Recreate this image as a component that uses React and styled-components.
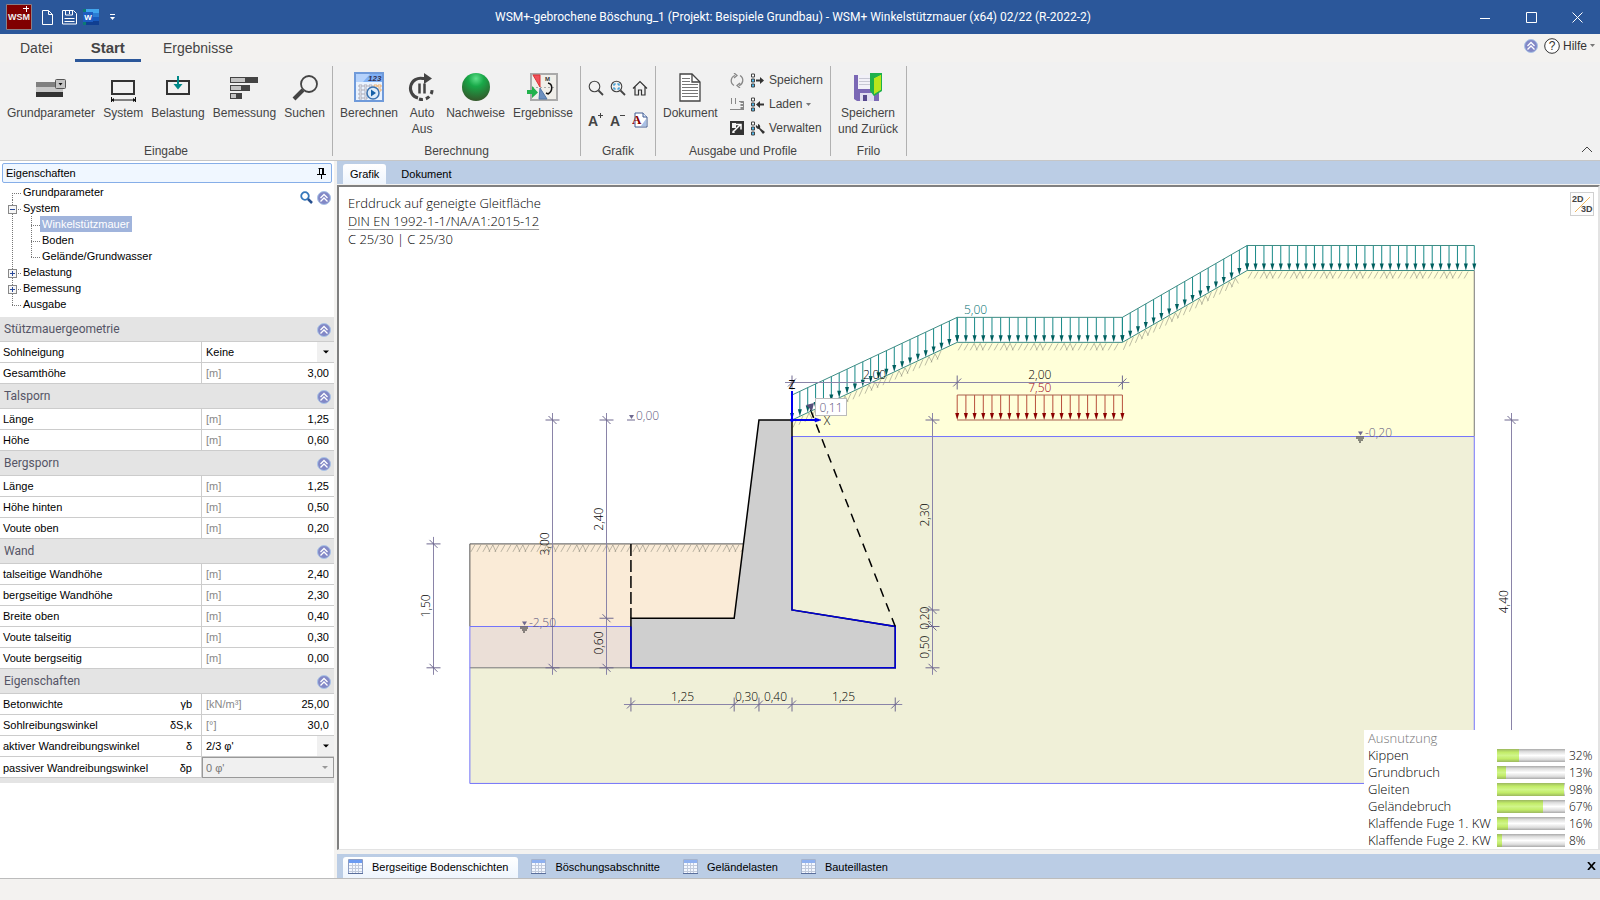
import { useState } from 'react'
import styled, { createGlobalStyle } from 'styled-components'

const UI = '"Liberation Sans", Arial, sans-serif'
const HEAD = 'Roboto, "Liberation Sans", sans-serif'
const DRAW = '"Open Sans", "Noto Sans", sans-serif'

const GlobalStyle = createGlobalStyle`
  * {
    box-sizing: border-box;
  }

  body {
    margin: 0;
    background: #f3f2f0;
    font-family: ${UI};
    font-size: 11px;
    color: #000;
  }

  button, input, select {
    font: inherit;
    color: inherit;
    border: 0;
    border-radius: 0;
    padding: 0;
    margin: 0;
    background: none;
  }
`

const Window = styled.div`
  display: flex;
  flex-direction: column;
  height: 100vh;
  overflow: hidden;
`

/* ---------- title bar ---------- */

const TitleBar = styled.header`
  display: flex;
  align-items: center;
  height: 34px;
  flex: none;
  background: #2b579a;
  color: #fff;
`

const QuickAccess = styled.div`
  display: flex;
  align-items: center;
  gap: 6px;
  padding-left: 6px;
  width: 124px;

  svg {
    display: block;
  }
`

const Title = styled.h1`
  flex: 1;
  margin: 0;
  text-align: center;
  font: 400 12px/32px ${HEAD};
`

const WindowButton = styled.button`
  display: grid;
  place-items: center;
  width: 46px;
  height: 34px;
`

/* ---------- ribbon ---------- */

const RibbonTabs = styled.nav`
  display: flex;
  gap: 6px;
  height: 28px;
  flex: none;
  padding-left: 4px;
  background: #f3f2f0;
`

const RibbonTab = styled.button`
  padding: 2px 16px 0;
  height: 28px;
  font-size: ${(props) => (props.$active ? 15 : 14)}px;
  font-weight: ${(props) => (props.$active ? 700 : 400)};
  color: #444;
  border-bottom: 3px solid ${(props) => (props.$active ? '#2b579a' : 'transparent')};
`

const HelpArea = styled.div`
  display: flex;
  align-items: center;
  gap: 6px;
  margin-left: auto;
  padding: 0 5px 5px 0;
  font-size: 12px;
  color: #333;
`

const HelpButton = styled.button`
  display: flex;
  align-items: center;
  gap: 3px;
`

const RibbonBar = styled.div`
  display: flex;
  height: 99px;
  flex: none;
  padding: 4px 7px 4px 0;
  background: #f1f1f1;
  border-bottom: 1px solid #c6c6c6;
  color: #444;
  font-size: 12px;
`

const Group = styled.section`
  display: flex;
  flex-direction: column;
  justify-content: space-between;
  min-width: ${(props) => props.$min}px;
  padding: 0 ${(props) => (props.$tight ? 4 : 7)}px;
  border-right: 1px solid #b1b1b1;
`

const GroupItems = styled.div`
  display: flex;
  justify-content: space-between;
`

const GroupName = styled.div`
  text-align: center;
  line-height: 10px;
`

const BigButton = styled.button`
  display: flex;
  flex-direction: column;
  align-items: center;
  padding-top: 6px;
  min-width: 32px;
  line-height: 16px;

  svg {
    display: block;
    margin-bottom: 3px;
  }
`

const IconGrid = styled.div`
  display: grid;
  grid-template-columns: repeat(3, 22px);
  grid-auto-rows: 32px;
  padding-top: 6px;
`

const IconButton = styled.button`
  display: grid;
  place-items: center;
`

const ProfileGrid = styled.div`
  display: grid;
  grid-template-columns: 16px auto;
  grid-auto-rows: 24px;
  column-gap: 5px;
  padding-top: 2px;
`

const ProfileButton = styled.button`
  display: flex;
  align-items: center;
  gap: 4px;
`

const Collapse = styled.button`
  margin-left: auto;
  align-self: flex-end;
`

/* ---------- body ---------- */

const Body = styled.div`
  display: flex;
  flex: 1;
  min-height: 0;
`

const Sidebar = styled.aside`
  flex: none;
  width: 334px;
  background: #fff;
  overflow: hidden;
`

const PanelHead = styled.div`
  display: flex;
  align-items: center;
  justify-content: space-between;
  height: 20px;
  margin: 2px 2px 1px;
  padding: 0 5px 0 3px;
  background: #f0f7ff;
  border: 1px solid #86aee8;
  border-radius: 2px;
`

const TreeArea = styled.div`
  display: flex;
  justify-content: space-between;
  height: 133px;
`

const TreeList = styled.ul`
  list-style: none;
  margin: 0;
  padding: 0 0 0 7px;
`

const TreeRow = styled.li`
  display: flex;
  align-items: center;
  height: 16px;

  svg {
    display: block;
  }
`

const TreeLabel = styled.button`
  height: 16px;
  padding: 0 3px 0 2px;
  line-height: 15px;
  background: ${(props) => (props.$active ? '#a0b4dc' : 'transparent')};
  color: ${(props) => (props.$active ? '#fff' : '#000')};
`

const TreeTools = styled.div`
  display: flex;
  align-items: flex-start;
  gap: 4px;
  padding: 7px 3px 0 0;
`

const SectionHead = styled.h2`
  display: flex;
  align-items: center;
  justify-content: space-between;
  height: 25px;
  margin: 0;
  padding: 1px 3px 0 4px;
  background: #e4e4e4;
  border-bottom: 1px solid #ccc;
  color: #556;
  font: 400 12px/23px ${HEAD};
`

const PropRow = styled.div`
  display: grid;
  grid-template-columns: 202px minmax(0, 1fr);
  height: 21px;
  border-bottom: 1px solid #ccc;
`

const PropLabel = styled.label`
  display: flex;
  align-items: center;
  justify-content: space-between;
  padding: 0 9px 0 3px;
  border-right: 1px solid #ccc;
`

const PropValue = styled.div`
  display: flex;
  align-items: center;
  padding: 0 5px 0 4px;
`

const Unit = styled.span`
  color: #888;
`

const PropInput = styled.input`
  flex: 1;
  min-width: 0;
  text-align: right;
`

const SelectBox = styled.div`
  display: grid;
  grid-template-columns: 1fr 17px;
  background: ${(props) => (props.$off ? '#f0f0f0' : '#fff')};
  border: ${(props) => (props.$off ? '1px solid #999' : '0')};

  svg {
    grid-area: 1 / 2;
    align-self: stretch;
    background: #f0f0f0;
    pointer-events: none;
  }
`

const PropSelect = styled.select`
  grid-area: 1 / 1 / 2 / 3;
  appearance: none;
  padding-left: ${(props) => (props.disabled ? 3 : 4)}px;
  color: ${(props) => (props.disabled ? '#777' : '#000')};
  opacity: 1;
`

const PanelEnd = styled.div`
  height: 5px;
  background: #e4e4e4;
`

const Main = styled.main`
  display: flex;
  flex-direction: column;
  flex: 1;
  min-width: 0;
  margin-left: 3px;
`

const TabBar = styled.div`
  display: flex;
  gap: 8px;
  height: ${(props) => (props.$low ? 24 : 23)}px;
  flex: none;
  padding: 3px 4px 0 6px;
  background: #bbcde5;
`

const Tab = styled.button`
  display: flex;
  align-items: center;
  gap: 9px;
  padding: ${(props) => (props.$icon ? '0 10px 2px 5px' : '0 7px')};
  border-radius: 3px 3px 0 0;
  background: ${(props) => (props.$active ? 'linear-gradient(#fff, #eef5fd)' : 'none')};
`

const CloseTab = styled.button`
  margin-left: auto;
  padding-bottom: 4px;
`

const Canvas = styled.div`
  position: relative;
  display: flex;
  flex: 1;
  min-height: 0;
  margin: 1px 0 4px;
  background: #fff;
  border: 2px solid;
  border-color: #808080 #e3e3e3 #e3e3e3 #808080;
  border-bottom-width: 1px;
`

const Drawing = styled.svg`
  display: block;
  flex: 1;
  min-width: 0;
  font-family: ${DRAW};
  font-weight: 300;
  font-size: 12px;
`

const CanvasHead = styled.div`
  position: absolute;
  top: 7px;
  left: 9px;
  font: 300 13px/18px ${DRAW};

  div:nth-child(2) {
    text-decoration: underline;
    text-decoration-color: #999;
    text-underline-offset: 3px;
  }
`

const ViewSwitch = styled.button`
  position: absolute;
  top: 5px;
  right: 4px;
  width: 24px;
  height: 24px;
  border: 1px solid #d0d0d0;
  background: #fdfdfd;

  svg {
    display: block;
  }
`

const Usage = styled.section`
  position: absolute;
  right: 0;
  bottom: 0;
  padding-left: 4px;
  background: #fff;
  font: 300 13px/17px ${DRAW};
`

const UsageTitle = styled.div`
  color: #777;
`

const UsageRow = styled.div`
  display: grid;
  grid-template-columns: 129px 68px 33px;
  align-items: center;
`

const Bar = styled.div`
  height: 13px;
  background: linear-gradient(#aaa, #ddd 20%, #fff 50%, #ddd 80%, #aaa);
`

const BarFill = styled.div`
  height: 13px;
  background: linear-gradient(#9cb860, #c2ec68 25%, #d0f58a 50%, #c2ec68 75%, #9cb860);
`

const Percent = styled.span`
  padding-left: 4px;
  font-size: 12px;
`

const StatusBar = styled.footer`
  height: 22px;
  flex: none;
  border-top: 1px solid #bcbcbc;
  background: #f3f2f0;
`

/* ---------- icons ---------- */

const Chevrons = ({ size = 14 }) => (
  <svg width={size} height={size} viewBox="0 0 14 14">
    <circle cx="7" cy="7" r="6.5" fill="#8288c6" stroke="#a9c3e6" />
    <path d="M3.5 7 7 3.5 10.5 7M3.5 10.5 7 7l3.5 3.5" fill="none" stroke="#fff" strokeWidth="1.3" />
  </svg>
)

const Triangle = ({ color = '#000', width = 17 }) => (
  <svg width={width} height="100%" viewBox="0 0 17 19">
    <path d="M6 8h6L9 11z" fill={color} />
  </svg>
)

const Lens = ({ zoom }) => (
  <svg width="16" height="16" viewBox="0 0 16 16" fill="none">
    <circle cx="6.5" cy="6.5" r="5.3" stroke="#444" strokeWidth="1.1" />
    <path d="M10.5 10.5 15 15" stroke="#444" strokeWidth="1.8" />
    {zoom && <path d="M4 5.8V4h1.800M7.200 4H9v1.800M9 7.200V9H7.200M5.800 9H4V7.200" stroke="#1e8fd0" strokeWidth="1.200" />}
  </svg>
)

const TableIcon = ({ active }) => (
  <svg width="15" height="15" viewBox="0 0 15 15">
    <path d="M.5.5h14v14H.5z" fill="#f4f8ff" stroke={active ? '#8a9cc4' : '#a4b3cd'} />
    <path d="M1 1h13v3H1z" fill={active ? '#6b9bf2' : '#8fb1f0'} />
    <path d="M1 6.5h13M1 9.5h13M1 12.5h13M4.5 4v10M7.5 4v10M10.5 4v10" stroke="#c2cbdc" />
    <path d="M0 14.500h15" stroke="#5a6f9c" />
  </svg>
)

const Squares = ({ children }) => (
  <svg width="15" height="15" viewBox="0 0 15 15">
    <path d="M1.5 1h3v3h-3z" fill="#fff" stroke="#444" />
    <path d="M1.5 6h3v3h-3zM1.5 11h3v3h-3z" fill="#4db8ee" stroke="#444" />
    {children}
  </svg>
)

const icons = {
  params: (
    <svg width="32" height="30" viewBox="0 0 32 30">
      <path d="M1 10h27v6H1z" fill="#808080" />
      <path d="M1 15h27v5H1z" fill="#c8c8c8" />
      <path d="M1 20h27v5H1z" fill="#333" />
      <rect x="20.5" y="7.5" width="10" height="9" rx="1" fill="#c4c4c4" stroke="#555" />
      <path d="M23.5 11h4l-2 2.5z" fill="#111" />
    </svg>
  ),
  system: (
    <svg width="30" height="30" viewBox="0 0 30 30" fill="none">
      <path d="M4 9h22v13H4z" stroke="#333" strokeWidth="2" />
      <path d="M3 28h25M3.5 25v5M27.5 25v5" stroke="#111" />
      <path d="m3 28 3-2v4zM28 28l-3-2v4z" fill="#111" />
    </svg>
  ),
  load: (
    <svg width="30" height="30" viewBox="0 0 30 30" fill="none">
      <path d="M4 9h22v13H4z" stroke="#333" strokeWidth="2" />
      <path d="M15 4v11" stroke="#088" strokeWidth="2" />
      <path d="M10.5 12h9L15 17.5z" fill="#088" />
    </svg>
  ),
  design: (
    <svg width="30" height="30" viewBox="0 0 30 30">
      <path d="M1 5h28v6H1zM1 13h20v6H1zM1 21h12v6H1z" fill="#444" />
      <path d="M2 6h14v4H2zM2 14h10v4H2zM2 22h5v4H2z" fill="#c4c4c4" />
    </svg>
  ),
  search: (
    <svg width="30" height="30" viewBox="0 0 30 30" fill="none" stroke="#444">
      <circle cx="19" cy="12" r="8" strokeWidth="1.8" />
      <path d="m13 18-9 9" strokeWidth="4" />
    </svg>
  ),
  calc: (
    <svg width="30" height="30" viewBox="0 0 30 30">
      <path d="M1 1h28v28H1z" fill="#eaf2fd" stroke="#6f9ada" strokeWidth="2" />
      <path d="M2 2h26v8H2z" fill="#7fb0f5" />
      <path d="M2 2h14L9 10H2z" fill="#b5d2fb" />
      <text x="14" y="9" fontSize="8" fontWeight="700" fontStyle="italic" fill="#335">123</text>
      <path d="M5 13h3v2H5zM10 13h3v2h-3zM15 13h3v2h-3zM5 17h3v2H5zM10 17h3v2h-3zM5 21h3v2H5zM10 21h3v2h-3zM5 25h3v2H5zM10 25h3v2h-3z" fill="#fff" stroke="#99a" strokeWidth=".8" />
      <path d="M20 13h3v2h-3zM24 13h3v2h-3zM24 17h3v2h-3z" fill="#fff" stroke="#e8a050" strokeWidth=".8" />
      <circle cx="19" cy="21" r="6" fill="#dcebfa" stroke="#3a72b0" strokeWidth="1.5" />
      <path d="m17 17.5 5 3.5-5 3.5z" fill="#1560a8" />
    </svg>
  ),
  auto: (
    <svg width="30" height="30" viewBox="0 0 30 30" fill="none" stroke="#444">
      <path d="M11 26A10 10 0 0 1 16 6.5h4" strokeWidth="3" />
      <path d="M17 1v11l8-5.5z" fill="#444" stroke="none" />
      <path d="M12 27a10 10 0 0 0 13-11" strokeWidth="3" strokeDasharray="4 3" />
      <path d="M12.5 11.5v10M17.5 11.5v10" strokeWidth="2.5" />
    </svg>
  ),
  ball: (
    <svg width="30" height="30" viewBox="0 0 30 30">
      <defs>
        <radialGradient id="ball" cx=".5" cy=".2" r=".8">
          <stop offset="0" stopColor="#5ee08a" />
          <stop offset=".35" stopColor="#18a848" />
          <stop offset="1" stopColor="#34572a" />
        </radialGradient>
      </defs>
      <circle cx="15" cy="15" r="14" fill="url(#ball)" />
    </svg>
  ),
  results: (
    <svg width="32" height="30" viewBox="0 0 32 30">
      <path d="M4 2h26v26H4z" fill="#f0efea" stroke="#aaa" strokeWidth="2" />
      <path d="M5 15.5h24" stroke="#aaa" strokeDasharray="2 2" />
      <path d="M6 3h7v12z" fill="#f0505a" stroke="#d33" />
      <path d="m13 16 7 11h-8z" fill="#6c90c0" stroke="#5378a8" />
      <text x="18" y="9" fontSize="6" fontWeight="700" fill="#333">M</text>
      <path d="M21 11c5 1 5 8 0 11l-2-1" fill="none" stroke="#111" strokeWidth="1.5" />
      <path d="M0 18h5v-4l6 6.500-6 5.500v-4H0z" fill="#22b24c" />
    </svg>
  ),
  document: (
    <svg width="30" height="30" viewBox="0 0 30 30" fill="none">
      <path d="M5 2h12l8 8v19H5z" fill="#fff" stroke="#444" strokeWidth="1.3" />
      <path d="M17 2v8h8" stroke="#444" strokeWidth="1.3" />
      <path d="M7 6.5h8M7 9.5h8M7 12.5h16M7 15.5h16M7 18.5h16M7 21.5h16M7 24.5h16" stroke="#777" />
    </svg>
  ),
  saveBack: (
    <svg width="30" height="30" viewBox="0 0 30 30">
      <path d="M1 3h25v26H4l-3-2z" fill="#7b68b5" />
      <path d="M5 3h14v14H5z" fill="#f2f1f8" />
      <path d="M6 6.5h11M6 9.5h11M6 12.5h11" stroke="#c8c8d4" />
      <path d="M7 21h14v8H7z" fill="#e0dcef" />
      <path d="M10 23h4v6h-4z" fill="#56478c" />
      <path d="M17 1h12v18l-8 5-4-5z" fill="#1eb14b" />
      <path d="m20.500 6 8-4v16l-8 5z" fill="#b8e61c" stroke="#1eb14b" />
    </svg>
  ),
}

const HomeIcon = () => (
  <svg width="16" height="16" viewBox="0 0 16 16" fill="none" stroke="#333" strokeWidth="1.2">
    <path d="m1 8.5 7-7 7 7M3 7v8h3.500v-5h3v5H13V7" />
  </svg>
)

const FontSizeIcon = ({ sign }) => (
  <svg width="16" height="16" viewBox="0 0 16 16">
    <text x="0" y="14" fontSize="14" fontWeight="700" fill="#444">A</text>
    <path d={sign === 'plus' ? 'M10 3.500h5M12.500 1v5' : 'M10 3.500h5'} stroke="#444" />
  </svg>
)

const FontDocIcon = () => (
  <svg width="16" height="16" viewBox="0 0 16 16">
    <path d="M3 1h8l4 4v10H3z" fill="#fff" stroke="#3f5a92" />
    <path d="M11 1v4h4" fill="#dfe9f8" stroke="#3f5a92" />
    <path d="M14 7v7H9z" fill="#a9c0e6" />
    <text x="0" y="12" fontSize="13" fontWeight="700" fontFamily="Liberation Serif" fill="#8b0000">A</text>
  </svg>
)

/* ---------- drawing of the wall ---------- */

// all geometry is in metres, origin at the upper rear edge of the wall
const PX = 82.6
const X = (m) => 453 + m * PX
const Y = (m) => 233 - m * PX
const pts = (list) => list.map(([x, z]) => `${X(x)},${Y(z)}`).join(' ')

const ground = [[0, 0], [2, 0.94], [4, 0.94], [5.51, 1.81], [8.26, 1.81]]
const wall = [[-0.4, 0], [0, 0], [0, -2.3], [1.25, -2.5], [1.25, -3], [-1.95, -3], [-1.95, -2.4], [-0.7, -2.4]]

const hatchPath = ([x1, z1], [x2, z2]) => {
  const a = X(x1)
  const b = X(x2)
  const slope = (Y(z2) - Y(z1)) / (b - a)
  const at = (x) => Y(z1) + (x - a) * slope
  let d = ''
  let i = 0
  for (let x = a + 1; x + 5 < b; x += 6) {
    d += `M${x + 4} ${at(x + 4) + 1}L${x} ${at(x) + 8}`
    if (i % 5 === 2 || i % 5 === 3) d += `M${x + 4} ${at(x + 4) + 1}L${x + 7} ${at(x + 7) + 8}`
    i += 1
  }
  return d
}

const Hatch = ({ from, to }) => (
  <path d={hatchPath(from, to)} fill="none" stroke="#77776a" strokeOpacity=".6" strokeWidth=".8" />
)

const Load = ({ from, to, count, color, head, line = color }) => {
  const arrows = []
  for (let i = 0; i <= count; i++) {
    const x = X(from[0] + ((to[0] - from[0]) * i) / count)
    const y = Y(from[1] + ((to[1] - from[1]) * i) / count)
    arrows.push(
      <g key={i}>
        <path d={`M${x} ${y - 25}V${y - 4}`} stroke={line} />
        <path d={`M${x - 2} ${y - 7}h4L${x} ${y}z`} fill={head} />
      </g>
    )
  }
  return (
    <g>
      {arrows}
      <path
        d={`M${X(from[0])} ${Y(from[1]) - 25}L${X(to[0])} ${Y(to[1]) - 25}M${X(from[0])} ${Y(from[1])}L${X(to[0])} ${Y(to[1])}`}
        stroke={color}
      />
    </g>
  )
}

const DimV = ({ x, stops, labels }) => (
  <g>
    <path d={`M${x} ${Y(stops[0]) - 7}V${Y(stops[stops.length - 1]) + 7}`} stroke="#8a84a8" />
    {stops.map((z) => (
      <path key={z} d={`M${x - 7} ${Y(z)}h14M${x - 4} ${Y(z) - 4}l8 8`} stroke="#6f698f" />
    ))}
    {labels.map((label, i) => (
      <text
        key={i}
        transform={`translate(${x - 4} ${(Y(stops[i]) + Y(stops[i + 1])) / 2}) rotate(-90)`}
        textAnchor="middle"
      >
        {label}
      </text>
    ))}
  </g>
)

const DimH = ({ y, stops, labels }) => (
  <g>
    <path d={`M${X(stops[0]) - 7} ${y}H${X(stops[stops.length - 1]) + 7}`} stroke="#8a84a8" />
    {stops.map((m) => (
      <path key={m} d={`M${X(m)} ${y - 7}v14M${X(m) - 4} ${y + 4}l8-8`} stroke="#6f698f" />
    ))}
    {labels.map((label, i) => (
      <text key={i} x={(X(stops[i]) + X(stops[i + 1])) / 2} y={y - 4} textAnchor="middle">{label}</text>
    ))}
  </g>
)

const Level = ({ x, z, label, water }) => (
  <g>
    <path d={`M${x - 2} ${Y(z) - 5}h5l-2.5 4z`} fill="#6f698f" />
    <path d={`M${x - 4} ${Y(z)}h8`} stroke="#6f698f" />
    {water && <path d={`M${x - 4} ${Y(z) + 1.5}h8M${x - 2} ${Y(z) + 3.5}h5M${x - 1} ${Y(z) + 5.5}h2`} stroke="#222" />}
    <text x={x + 5} y={Y(z)} fill="#5f5a80">{label}</text>
  </g>
)

const WallDrawing = () => (
  <Drawing viewBox="0 0 1259 662" role="img" aria-label="Winkelstützmauer">
    <polygon points={pts([...ground, [8.26, -0.2], [0, -0.2]])} fill="#ffffd9" />
    <polygon points={pts([[0, -0.2], [8.26, -0.2], [8.26, -4.4], [-3.9, -4.4], [-3.9, -3], [0, -3]])} fill="#f0f0d8" />
    <polygon points={pts([[-3.9, -1.5], [-0.5, -1.5], [-0.5, -2.5], [-3.9, -2.5]])} fill="#faebd7" />
    <polygon points={pts([[-3.9, -2.5], [-0.5, -2.5], [-0.5, -3], [-3.9, -3]])} fill="#ebdfd7" />

    <Hatch from={[-3.9, -1.5]} to={[-0.55, -1.5]} />
    <Hatch from={ground[0]} to={[1.85, 0.87]} />
    <Hatch from={ground[1]} to={ground[2]} />
    <Hatch from={ground[2]} to={[5.4, 1.747]} />
    <Hatch from={ground[3]} to={ground[4]} />

    <g fill="none">
      <polyline points={pts([[-3.9, -2.5], [-3.9, -1.5], [-0.58, -1.5]])} stroke="#555" />
      <polyline points={pts([[-3.9, -3], [-1.95, -3]])} stroke="#777" />
      <polyline points={pts([[8.26, 1.81], [8.26, -0.2]])} stroke="#777" />
      <polyline points={pts([[-1.95, -2.5], [-3.9, -2.5], [-3.9, -4.4], [8.26, -4.4], [8.26, -0.2], [0, -0.2]])} stroke="#7474fa" />
    </g>

    <polygon points={pts(wall)} fill="#cfcfcf" stroke="#000" strokeWidth="1.5" />
    <polyline
      points={pts([[0, -0.2], [0, -2.3], [1.25, -2.5], [1.25, -3], [-1.95, -3], [-1.95, -2.5]])}
      fill="none"
      stroke="#0000d8"
      strokeWidth="1.5"
    />
    <path d={`M${X(1.25)} ${Y(-2.5)}L${X(0.21)} ${Y(0.16)}`} stroke="#000" strokeWidth="1.5" strokeDasharray="9 7" />
    <path d={`M${X(-1.95)} ${Y(-1.5)}V${Y(-2.4)}`} stroke="#000" strokeWidth="1.5" strokeDasharray="12 4" />

    <Load from={ground[0]} to={ground[1]} count={21} color="#3d8c84" line="#188a88" head="#005f5f" />
    <Load from={ground[1]} to={ground[2]} count={19} color="#3d8c84" line="#188a88" head="#005f5f" />
    <Load from={ground[2]} to={ground[3]} count={16} color="#3d8c84" line="#188a88" head="#005f5f" />
    <Load from={ground[3]} to={ground[4]} count={27} color="#3d8c84" line="#188a88" head="#005f5f" />
    <Load from={[2, 0]} to={[4, 0]} count={19} color="#a8604c" line="#b8503c" head="#8b0000" />

    <text x="625" y="127" fill="#007070">5,00</text>
    <text x={X(3)} y="205" fill="#a00020" textAnchor="middle">7,50</text>

    <DimH y={195.5} stops={[0, 2, 4]} labels={['2,00', '2,00']} />
    <DimH y={517.5} stops={[-1.95, -0.7, -0.4, 0, 1.25]} labels={['1,25', '0,30', '0,40', '1,25']} />
    <DimV x={94.5} stops={[-1.5, -3]} labels={['1,50']} />
    <DimV x={213.5} stops={[0, -3]} labels={['3,00']} />
    <DimV x={267.5} stops={[0, -2.4, -3]} labels={['2,40', '0,60']} />
    <DimV x={593.5} stops={[0, -2.3, -2.5, -3]} labels={['2,30', '0,20', '0,50']} />
    <DimV x={1172.5} stops={[0, -4.4]} labels={['4,40']} />

    <Level x={292} z={0} label="0,00" />
    <Level x={185} z={-2.5} label="-2,50" water />
    <Level x={1021} z={-0.2} label="-0,20" water />

    <g stroke="#0000f0" fill="#0000f0">
      <path d={`M${X(0)} ${Y(0)}V204`} strokeWidth="2" />
      <path d={`M${X(0)} ${Y(0)}H480`} strokeWidth="2" />
      <path d="M476 231l6 2-6 2z" strokeWidth=".5" />
      <circle cx={X(0)} cy={Y(0)} r="1.5" />
    </g>
    <text x={X(0)} y="202" textAnchor="middle" fontWeight="400">Z</text>
    <text x="488" y="238" textAnchor="middle">X</text>
    <path d="M467 218l8-2-2 8z" fill="#55507a" />
    <rect x="476.5" y="211.5" width="31" height="17" fill="#fff" stroke="#bbb" />
    <text x="492" y="225" textAnchor="middle" fill="#5f5a80">0,11</text>
  </Drawing>
)

/* ---------- data ---------- */

const tree = [
  { label: 'Grundparameter', first: true },
  { label: 'System', box: 'minus' },
  { label: 'Winkelstützmauer', child: true },
  { label: 'Boden', child: true },
  { label: 'Gelände/Grundwasser', child: true, last: true },
  { label: 'Belastung', box: 'plus' },
  { label: 'Bemessung', box: 'plus' },
  { label: 'Ausgabe', last: true },
]

const sections = [
  {
    name: 'Stützmauergeometrie',
    rows: [
      { label: 'Sohlneigung', options: ['Keine'] },
      { label: 'Gesamthöhe', unit: '[m]', value: '3,00' },
    ],
  },
  {
    name: 'Talsporn',
    rows: [
      { label: 'Länge', unit: '[m]', value: '1,25' },
      { label: 'Höhe', unit: '[m]', value: '0,60' },
    ],
  },
  {
    name: 'Bergsporn',
    rows: [
      { label: 'Länge', unit: '[m]', value: '1,25' },
      { label: 'Höhe hinten', unit: '[m]', value: '0,50' },
      { label: 'Voute oben', unit: '[m]', value: '0,20' },
    ],
  },
  {
    name: 'Wand',
    rows: [
      { label: 'talseitige Wandhöhe', unit: '[m]', value: '2,40' },
      { label: 'bergseitige Wandhöhe', unit: '[m]', value: '2,30' },
      { label: 'Breite oben', unit: '[m]', value: '0,40' },
      { label: 'Voute talseitig', unit: '[m]', value: '0,30' },
      { label: 'Voute bergseitig', unit: '[m]', value: '0,00' },
    ],
  },
  {
    name: 'Eigenschaften',
    rows: [
      { label: 'Betonwichte', symbol: 'γb', unit: '[kN/m³]', value: '25,00' },
      { label: 'Sohlreibungswinkel', symbol: 'δS,k', unit: '[°]', value: '30,0' },
      { label: 'aktiver Wandreibungswinkel', symbol: 'δ', options: ["2/3 φ'"] },
      { label: 'passiver Wandreibungswinkel', symbol: 'δp', options: ["0 φ'"], off: true },
    ],
  },
]

const usage = [
  ['Kippen', 32],
  ['Grundbruch', 13],
  ['Gleiten', 98],
  ['Geländebruch', 67],
  ['Klaffende Fuge 1. KW', 16],
  ['Klaffende Fuge 2. KW', 8],
]

/* ---------- parts ---------- */

const TreeGuide = ({ item }) => {
  const dots = { stroke: '#777', strokeDasharray: '1 1' }
  return (
    <svg width={item.child ? 33 : 14} height="16" viewBox={`0 0 ${item.child ? 33 : 14} 16`} fill="none">
      {item.child ? (
        <>
          <path d="M5.5 0v16" {...dots} />
          <path d={item.last ? 'M24.5 0v9M24 9.5h9' : 'M24.5 0v16M24 9.5h9'} {...dots} />
        </>
      ) : (
        <path d={`M5.5 ${item.first ? 9 : 0}V${item.last ? 9 : 16}M5 9.5h9`} {...dots} />
      )}
      {item.box && (
        <>
          <rect x="1.5" y="5.5" width="8" height="8" fill="#f6f6f6" stroke="#888" />
          <path d={item.box === 'plus' ? 'M3 9.5h5M5.5 7v5' : 'M3 9.5h5'} stroke="#2a4a9a" />
        </>
      )}
    </svg>
  )
}

const Property = ({ id, row }) => (
  <PropRow>
    <PropLabel htmlFor={id}>
      <span>{row.label}</span>
      <span>{row.symbol}</span>
    </PropLabel>
    {row.options ? (
      <SelectBox $off={row.off}>
        <PropSelect id={id} disabled={row.off}>
          {row.options.map((o) => <option key={o}>{o}</option>)}
        </PropSelect>
        <Triangle color={row.off ? '#999' : '#000'} />
      </SelectBox>
    ) : (
      <PropValue>
        <Unit>{row.unit}</Unit>
        <PropInput id={id} defaultValue={row.value} />
      </PropValue>
    )}
  </PropRow>
)

const Properties = () => {
  const [selected, setSelected] = useState('Winkelstützmauer')

  return (
    <Sidebar>
      <PanelHead>
        <span>Eigenschaften</span>
        <svg width="9" height="11" viewBox="0 0 9 11" fill="none" stroke="#000">
          <path d="M2.5 0v6M1.5.5h5M0 6.5h9M4.5 7v4" />
          <path d="M6 0v6" strokeWidth="2" />
        </svg>
      </PanelHead>
      <TreeArea>
        <TreeList>
          {tree.map((item) => (
            <TreeRow key={item.label}>
              <TreeGuide item={item} />
              <TreeLabel $active={item.label === selected} onClick={() => setSelected(item.label)}>
                {item.label}
              </TreeLabel>
            </TreeRow>
          ))}
        </TreeList>
        <TreeTools>
          <button aria-label="Suchen">
            <svg width="13" height="13" viewBox="0 0 13 13" fill="none">
              <circle cx="5" cy="5" r="3.8" stroke="#3577bb" strokeWidth="1.8" />
              <path d="m8 8 4 4" stroke="#27508f" strokeWidth="2.5" />
            </svg>
          </button>
          <button aria-label="Einklappen"><Chevrons /></button>
        </TreeTools>
      </TreeArea>
      {sections.map((section) => (
        <section key={section.name}>
          <SectionHead>
            {section.name}
            <Chevrons />
          </SectionHead>
          {section.rows.map((row) => (
            <Property key={row.label} id={`${section.name}-${row.label}`.replace(/ /g, '-')} row={row} />
          ))}
        </section>
      ))}
      <PanelEnd />
    </Sidebar>
  )
}

const Ribbon = () => (
  <RibbonBar>
    <Group $min={333}>
      <GroupItems>
        <BigButton>{icons.params}Grundparameter</BigButton>
        <BigButton>{icons.system}System</BigButton>
        <BigButton>{icons.load}Belastung</BigButton>
        <BigButton>{icons.design}Bemessung</BigButton>
        <BigButton>{icons.search}Suchen</BigButton>
      </GroupItems>
      <GroupName>Eingabe</GroupName>
    </Group>
    <Group $min={248}>
      <GroupItems>
        <BigButton>{icons.calc}Berechnen</BigButton>
        <BigButton>{icons.auto}Auto<br />Aus</BigButton>
        <BigButton>{icons.ball}Nachweise</BigButton>
        <BigButton>{icons.results}Ergebnisse</BigButton>
      </GroupItems>
      <GroupName>Berechnung</GroupName>
    </Group>
    <Group $min={75} $tight>
      <IconGrid>
        <IconButton aria-label="Lupe"><Lens /></IconButton>
        <IconButton aria-label="Zoom"><Lens zoom /></IconButton>
        <IconButton aria-label="Gesamtansicht"><HomeIcon /></IconButton>
        <IconButton aria-label="Schrift größer"><FontSizeIcon sign="plus" /></IconButton>
        <IconButton aria-label="Schrift kleiner"><FontSizeIcon sign="minus" /></IconButton>
        <IconButton aria-label="Schriftart"><FontDocIcon /></IconButton>
      </IconGrid>
      <GroupName>Grafik</GroupName>
    </Group>
    <Group $min={175}>
      <GroupItems>
        <BigButton>{icons.document}Dokument</BigButton>
        <ProfileGrid>
          <IconButton aria-label="Aktualisieren">
            <svg width="14" height="15" viewBox="0 0 14 15" fill="none" stroke="#888" strokeWidth="1.3">
              <path d="M5 2.500a5.500 5.500 0 0 0-1 10M9 12.500a5.500 5.500 0 0 0 1-10" />
              <path d="m4 0 3 2.500L4 5M10 10l-3 2.500 3 2.500" />
            </svg>
          </IconButton>
          <ProfileButton>
            <Squares><path d="M6 7.5h5" stroke="#333" strokeWidth="2" /><path d="M10 4l4 3.500-4 3.500z" fill="#333" /></Squares>
            Speichern
          </ProfileButton>
          <IconButton aria-label="Maße">
            <svg width="14" height="13" viewBox="0 0 14 13" fill="none" stroke="#888">
              <path d="M1.5 0v6M5.5 0v6M0 11.5h14" />
              <path d="M9 3.500h4.500v8" />
              <path d="M12 3v8" strokeWidth="3" strokeDasharray="2 1" />
            </svg>
          </IconButton>
          <ProfileButton>
            <Squares><path d="M9 7.5h5" stroke="#333" strokeWidth="2" /><path d="M10 4 6 7.500l4 3.500z" fill="#333" /></Squares>
            Laden
            <svg width="5" height="3" viewBox="0 0 5 3"><path d="M0 0h5L2.5 3z" fill="#777" /></svg>
          </ProfileButton>
          <IconButton aria-label="Vergrößern">
            <svg width="14" height="14" viewBox="0 0 14 14" fill="none">
              <path d="M0 0h14v14H0z" fill="#333" />
              <path d="M2 2h4v5H2zM2 12l1-3 2 3z" fill="#f1f1f1" />
              <path d="m3 11 7-7M6 3.500h5v5" stroke="#fff" strokeWidth="1.500" />
            </svg>
          </IconButton>
          <ProfileButton>
            <Squares><path d="M6 4a3 3 0 0 0 3 4l4 5 2-2-5-4a3 3 0 0 0-2-4v2.500z" fill="#333" /></Squares>
            Verwalten
          </ProfileButton>
        </ProfileGrid>
      </GroupItems>
      <GroupName>Ausgabe und Profile</GroupName>
    </Group>
    <Group $min={76}>
      <GroupItems>
        <BigButton>{icons.saveBack}Speichern<br />und Zurück</BigButton>
      </GroupItems>
      <GroupName>Frilo</GroupName>
    </Group>
    <Collapse aria-label="Menüband reduzieren">
      <svg width="12" height="7" viewBox="0 0 12 7" fill="none" stroke="#444"><path d="m1 6 5-5 5 5" /></svg>
    </Collapse>
  </RibbonBar>
)

const App = () => {
  const [view, setView] = useState('Grafik')
  const [table, setTable] = useState('Bergseitige Bodenschichten')

  return (
    <Window>
      <GlobalStyle />
      <TitleBar>
        <QuickAccess>
          <svg width="26" height="26" viewBox="0 0 26 26">
            <path d="M.5.5h25v25H.5z" fill="#800000" stroke="#8a7f86" />
            <text x="13" y="16" fontSize="9" fontWeight="700" textAnchor="middle" fill="#eee">WSM</text>
            <path d="M17 4.5h6M20.5 2v6" stroke="#fff" />
          </svg>
          <IconButton aria-label="Neu">
            <svg width="18" height="15" viewBox="0 0 18 15" fill="none" stroke="#fff">
              <path d="M4.5.5h6l4 4v10h-10zM10.5.5v4h4" />
            </svg>
          </IconButton>
          <IconButton aria-label="Speichern">
            <svg width="15" height="15" viewBox="0 0 15 15" fill="none" stroke="#fff">
              <path d="M.5.5h11l3 3v10.500H.5zM3.500.5v4.500h7V.5M2.500 8.500h10M2.500 11.500h10M7.500 1v3" />
            </svg>
          </IconButton>
          <IconButton aria-label="Word">
            <svg width="16" height="16" viewBox="0 0 16 16">
              <path d="M3 0h13v4H3z" fill="#41a5ee" />
              <path d="M3 4h13v4H3z" fill="#2b7cd3" />
              <path d="M3 8h13v4H3z" fill="#185abd" />
              <path d="M0 0h3v16H0z" fill="#0b7a74" />
              <path d="M3 12h13v4H3z" fill="#103f91" />
              <path d="M0 3h10v10H0z" fill="#1d5cc0" />
              <text x="5" y="11" fontSize="8" fontWeight="700" textAnchor="middle" fill="#fff">W</text>
            </svg>
          </IconButton>
          <IconButton aria-label="Anpassen">
            <svg width="15" height="7" viewBox="0 0 15 7"><path d="M5 .5h5" stroke="#fff" /><path d="M5 3h5L7.5 6z" fill="#fff" /></svg>
          </IconButton>
        </QuickAccess>
        <Title>WSM+-gebrochene Böschung_1 (Projekt: Beispiele Grundbau) - WSM+ Winkelstützmauer (x64) 02/22 (R-2022-2)</Title>
        <WindowButton aria-label="Minimieren">
          <svg width="11" height="11" stroke="#fff"><path d="M0 6.5h10" /></svg>
        </WindowButton>
        <WindowButton aria-label="Maximieren">
          <svg width="11" height="11" stroke="#fff" fill="none"><path d="M.5.5h10v10H.5z" /></svg>
        </WindowButton>
        <WindowButton aria-label="Schließen">
          <svg width="11" height="11" stroke="#fff"><path d="M.5.5l10 10M10.5.5l-10 10" /></svg>
        </WindowButton>
      </TitleBar>

      <RibbonTabs>
        <RibbonTab>Datei</RibbonTab>
        <RibbonTab $active>Start</RibbonTab>
        <RibbonTab>Ergebnisse</RibbonTab>
        <HelpArea>
          <Chevrons />
          <HelpButton>
            <svg width="16" height="16" viewBox="0 0 16 16">
              <circle cx="8" cy="8" r="7.3" fill="#fff" stroke="#333" />
              <text x="8" y="12" fontSize="12" textAnchor="middle" fill="#333">?</text>
            </svg>
            Hilfe
            <svg width="5" height="3" viewBox="0 0 5 3"><path d="M0 0h5L2.5 3z" fill="#777" /></svg>
          </HelpButton>
        </HelpArea>
      </RibbonTabs>
      <Ribbon />

      <Body>
        <Properties />
        <Main>
          <TabBar>
            {['Grafik', 'Dokument'].map((name) => (
              <Tab key={name} $active={view === name} onClick={() => setView(name)}>{name}</Tab>
            ))}
          </TabBar>
          <Canvas>
            <WallDrawing />
            <CanvasHead>
              <div>Erddruck auf geneigte Gleitfläche</div>
              <div>DIN EN 1992-1-1/NA/A1:2015-12</div>
              <div>C 25/30 | C 25/30</div>
            </CanvasHead>
            <ViewSwitch aria-label="2D/3D">
              <svg width="22" height="22" viewBox="0 0 22 22">
                <path d="M4 19 19 4" stroke="#f0b860" />
                <text x="1" y="9" fontSize="9" fontWeight="700" fill="#444">2D</text>
                <text x="10" y="19" fontSize="9" fontWeight="700" fill="#444">3D</text>
              </svg>
            </ViewSwitch>
            <Usage>
              <UsageTitle>Ausnutzung</UsageTitle>
              {usage.map(([name, value]) => (
                <UsageRow key={name}>
                  <span>{name}</span>
                  <Bar><BarFill style={{ width: `${value}%` }} /></Bar>
                  <Percent>{value}%</Percent>
                </UsageRow>
              ))}
            </Usage>
          </Canvas>
          <TabBar $low>
            {['Bergseitige Bodenschichten', 'Böschungsabschnitte', 'Geländelasten', 'Bauteillasten'].map((name) => (
              <Tab key={name} $icon $active={table === name} onClick={() => setTable(name)}>
                <TableIcon active={table === name} />
                {name}
              </Tab>
            ))}
            <CloseTab aria-label="Schließen">
              <svg width="9" height="8" viewBox="0 0 9 8" stroke="#000" strokeWidth="1.7"><path d="m1 0 7 8M8 0 1 8" /></svg>
            </CloseTab>
          </TabBar>
        </Main>
      </Body>
      <StatusBar />
    </Window>
  )
}

export default App
